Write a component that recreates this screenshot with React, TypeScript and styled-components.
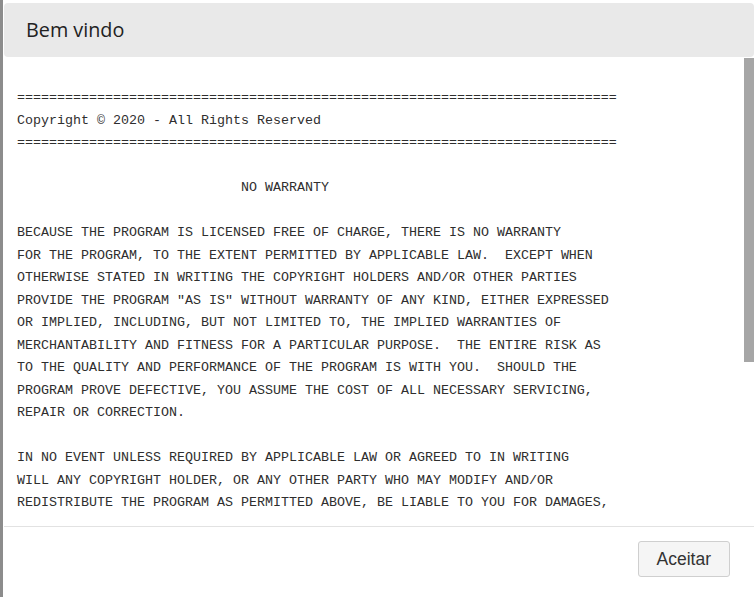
import React from "react";
import styled, { createGlobalStyle } from "styled-components";

const Global = createGlobalStyle`
  html, body { margin: 0; padding: 0; background: #fff; }
  body { font-family: "Open Sans", "Liberation Sans", sans-serif; }
`;

const Frame = styled.div`
  box-sizing: border-box;
  height: 597px;
  width: 756px;
  border-left: 3px solid #8c8c8c;
  padding: 3px 2px 0 1px;
  display: flex;
  flex-direction: column;
  background: #fff;
`;

const Header = styled.div`
  flex: 0 0 54px;
  background: #e9e9e9;
  border-radius: 4px;
  display: flex;
  align-items: center;
  padding-left: 22px;
  padding-bottom: 1px;
  box-sizing: border-box;
`;

const Title = styled.h1`
  margin: 0;
  font-family: "Open Sans", "Liberation Sans", sans-serif;
  font-weight: 400;
  font-size: 19.8px;
  color: #222;
`;

const BodyRow = styled.div`
  flex: 1 1 auto;
  min-height: 0;
  display: flex;
  flex-direction: row;
`;

const Viewport = styled.div`
  flex: 1 1 auto;
  overflow: hidden;
  margin-bottom: 12px;
`;

const Track = styled.div`
  flex: 0 0 10px;
  background: #fff;
  padding-top: 1px;
`;

const Thumb = styled.div`
  background: #a6a6a6;
`;

const License = styled.pre`
  margin: 0;
  padding: 30px 13px 40px 13px;
  font-family: "Liberation Mono", "DejaVu Sans Mono", monospace;
  font-size: 13.33px;
  line-height: 22.5px;
  color: #2e2e2e;
  white-space: pre;
`;

const Footer = styled.div`
  flex: 0 0 71px;
  border-top: 1px solid #e2e2e2;
  display: flex;
  justify-content: flex-end;
  align-items: flex-start;
  padding: 14px 24px 0 0;
  box-sizing: border-box;
`;

const Button = styled.button`
  height: 36px;
  padding: 0 18px;
  background: #f5f5f5;
  border: 1px solid #cfcfcf;
  border-radius: 3px;
  font-family: "Liberation Sans", Arial, sans-serif;
  font-size: 17.5px;
  color: #333;
  cursor: pointer;
`;

const eq = "=".repeat(75);

const text = `${eq}
Copyright \u00a9 2020 - All Rights Reserved
${eq}

                            NO WARRANTY

BECAUSE THE PROGRAM IS LICENSED FREE OF CHARGE, THERE IS NO WARRANTY
FOR THE PROGRAM, TO THE EXTENT PERMITTED BY APPLICABLE LAW.  EXCEPT WHEN
OTHERWISE STATED IN WRITING THE COPYRIGHT HOLDERS AND/OR OTHER PARTIES
PROVIDE THE PROGRAM "AS IS" WITHOUT WARRANTY OF ANY KIND, EITHER EXPRESSED
OR IMPLIED, INCLUDING, BUT NOT LIMITED TO, THE IMPLIED WARRANTIES OF
MERCHANTABILITY AND FITNESS FOR A PARTICULAR PURPOSE.  THE ENTIRE RISK AS
TO THE QUALITY AND PERFORMANCE OF THE PROGRAM IS WITH YOU.  SHOULD THE
PROGRAM PROVE DEFECTIVE, YOU ASSUME THE COST OF ALL NECESSARY SERVICING,
REPAIR OR CORRECTION.

IN NO EVENT UNLESS REQUIRED BY APPLICABLE LAW OR AGREED TO IN WRITING
WILL ANY COPYRIGHT HOLDER, OR ANY OTHER PARTY WHO MAY MODIFY AND/OR
REDISTRIBUTE THE PROGRAM AS PERMITTED ABOVE, BE LIABLE TO YOU FOR DAMAGES,`;

export default function App() {
  const thumbHeight = 304;
  return (
    <>
      <Global />
      <Frame>
        <Header>
          <Title>Bem vindo</Title>
        </Header>
        <BodyRow>
          <Viewport>
            <License>{text}</License>
          </Viewport>
          <Track>
            <Thumb style={{ height: thumbHeight }} />
          </Track>
        </BodyRow>
        <Footer>
          <Button>Aceitar</Button>
        </Footer>
      </Frame>
    </>
  );
}
